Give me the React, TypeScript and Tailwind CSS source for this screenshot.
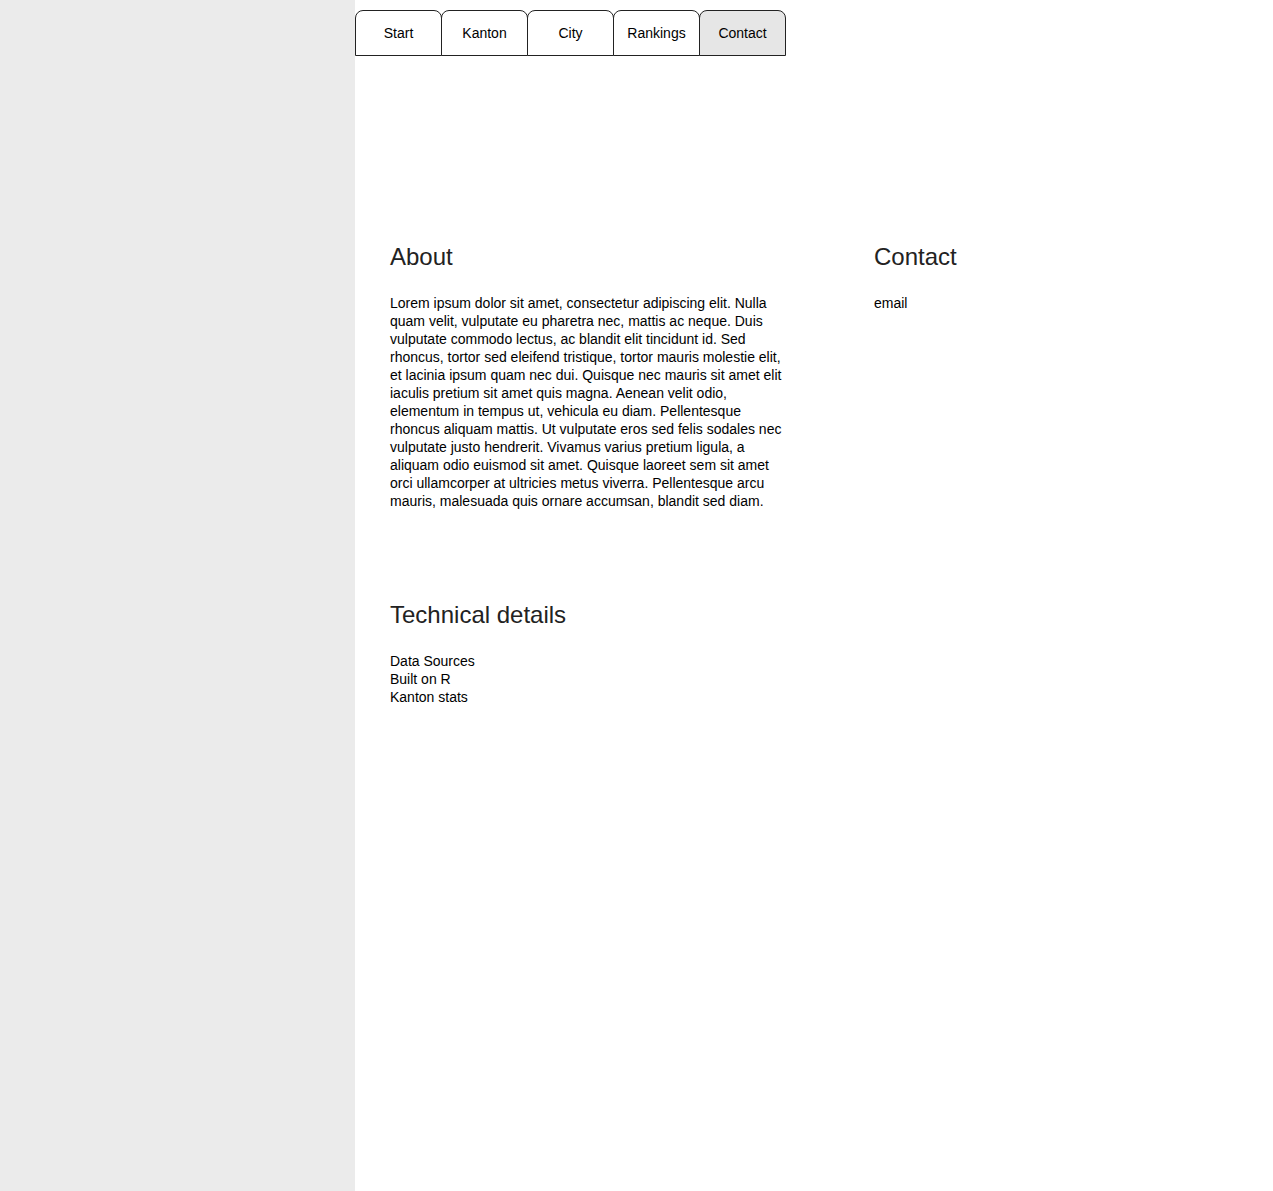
const tabs = ["Start", "Kanton", "City", "Rankings", "Contact"];

const lorem =
  "Lorem ipsum dolor sit amet, consectetur adipiscing elit. Nulla quam velit, vulputate eu pharetra nec, mattis ac neque. Duis vulputate commodo lectus, ac blandit elit tincidunt id. Sed rhoncus, tortor sed eleifend tristique, tortor mauris molestie elit, et lacinia ipsum quam nec dui. Quisque nec mauris sit amet elit iaculis pretium sit amet quis magna. Aenean velit odio, elementum in tempus ut, vehicula eu diam. Pellentesque rhoncus aliquam mattis. Ut vulputate eros sed felis sodales nec vulputate justo hendrerit. Vivamus varius pretium ligula, a aliquam odio euismod sit amet. Quisque laoreet sem sit amet orci ullamcorper at ultricies metus viverra. Pellentesque arcu mauris, malesuada quis ornare accumsan, blandit sed diam.";

export default function App() {
  return (
    <div className="flex min-h-[1191px] w-full bg-white font-['Liberation_Sans',Arial,sans-serif] text-[14px] leading-[18px] text-black">
      {/* sidebar */}
      <div className="w-[355px] shrink-0 bg-[#ebebeb]" />

      <div className="flex-1">
        {/* tabs */}
        <div className="mt-[10px] flex">
          {tabs.map((t, i) => (
            <div
              key={t}
              className={
                "flex h-[46px] w-[87px] items-center justify-center rounded-t-[8px] border border-[#222] " +
                (i > 0 ? "-ml-px " : "") +
                (t === "Contact" ? "bg-[#e6e6e6]" : "bg-white")
              }
            >
              {t}
            </div>
          ))}
        </div>

        <div className="flex pl-[35px] pt-[187px]">
          <div className="w-[484px]">
            <h2 className="text-[24px] leading-[28px] text-[#222]">About</h2>
            <p className="mt-[23px] w-[396px]">{lorem}</p>

            <h2 className="mt-[91px] text-[24px] leading-[28px] text-[#222]">Technical details</h2>
            <div className="mt-[23px]">
              <div>Data Sources</div>
              <div>Built on R</div>
              <div>Kanton stats</div>
            </div>
          </div>
          <div>
            <h2 className="text-[24px] leading-[28px] text-[#222]">Contact</h2>
            <p className="mt-[23px]">email</p>
          </div>
        </div>
      </div>
    </div>
  );
}
